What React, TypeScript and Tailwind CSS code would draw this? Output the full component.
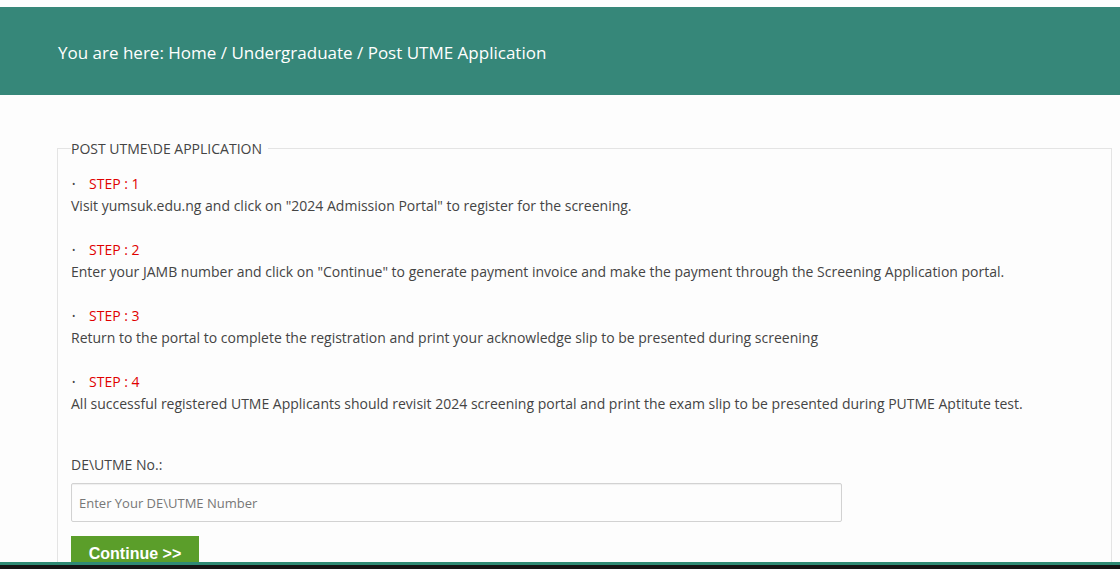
import React from "react";

const steps = [
  {
    label: "STEP : 1",
    text: 'Visit yumsuk.edu.ng and click on "2024 Admission Portal" to register for the screening.',
  },
  {
    label: "STEP : 2",
    text: 'Enter your JAMB number and click on "Continue" to generate payment invoice and make the payment through the Screening Application portal.',
  },
  {
    label: "STEP : 3",
    text: "Return to the portal to complete the registration and print your acknowledge slip to be presented during screening",
  },
  {
    label: "STEP : 4",
    text: "All successful registered UTME Applicants should revisit 2024 screening portal and print the exam slip to be presented during PUTME Aptitute test.",
  },
];

export default function App() {
  return (
    <div className="relative h-[569px] overflow-hidden bg-[#fdfdfd] font-['Open_Sans',sans-serif] pt-[7px]">
      {/* breadcrumb banner */}
      <div className="h-[88px] bg-[#368779] flex items-center px-[58px] pt-[4px]">
        <p className="text-[17px] text-white">
          You are here: Home / Undergraduate / Post UTME Application
        </p>
      </div>

      <div className="pl-[57px] pr-[8px] pt-[43px]">
        <fieldset className="border border-[#e4e4e4] pl-[13px] pr-4 pt-[14px] pb-8">
          <legend className="px-0 pr-[6px] text-[14px] text-[#444] uppercase -mt-[2px]">
            POST UTME\DE APPLICATION
          </legend>

          <ul className="flex flex-col gap-[22px]">
            {steps.map((s) => (
              <li key={s.label} className="text-[14px] leading-[22px] text-[#444]">
                <div className="flex items-center">
                  <span className="w-[18px] pl-[1px] text-[9px]">•</span>
                  <span className="text-[#e00000] font-medium">{s.label}</span>
                </div>
                <p>{s.text}</p>
              </li>
            ))}
          </ul>

          <label className="block mt-[39px] text-[14px] leading-[22px] text-[#444]">
            DE\UTME No.:
          </label>
          <input
            type="text"
            placeholder="Enter Your DE\UTME Number"
            className="mt-[7px] block w-[771px] h-[39px] border border-[#d2d2d2] rounded-[2px] px-[7px] text-[13px] text-[#555] placeholder:text-[#777] shadow-[inset_0_1px_1px_rgba(0,0,0,0.06)]"
          />
          <button
            type="button"
            className="mt-[14px] w-[128px] h-[34px] bg-[#5b9e2a] text-white font-bold text-[16px] font-['Liberation_Sans',Arial,sans-serif] pt-[2px] leading-none text-center"
          >
            Continue &gt;&gt;
          </button>
        </fieldset>
      </div>

      {/* fixed footer strip */}
      <div className="absolute left-0 right-0 bottom-0">
        <div className="h-[3px] bg-[#2f8a74]" />
        <div className="h-[4px] bg-[#151515]" />
      </div>
    </div>
  );
}
